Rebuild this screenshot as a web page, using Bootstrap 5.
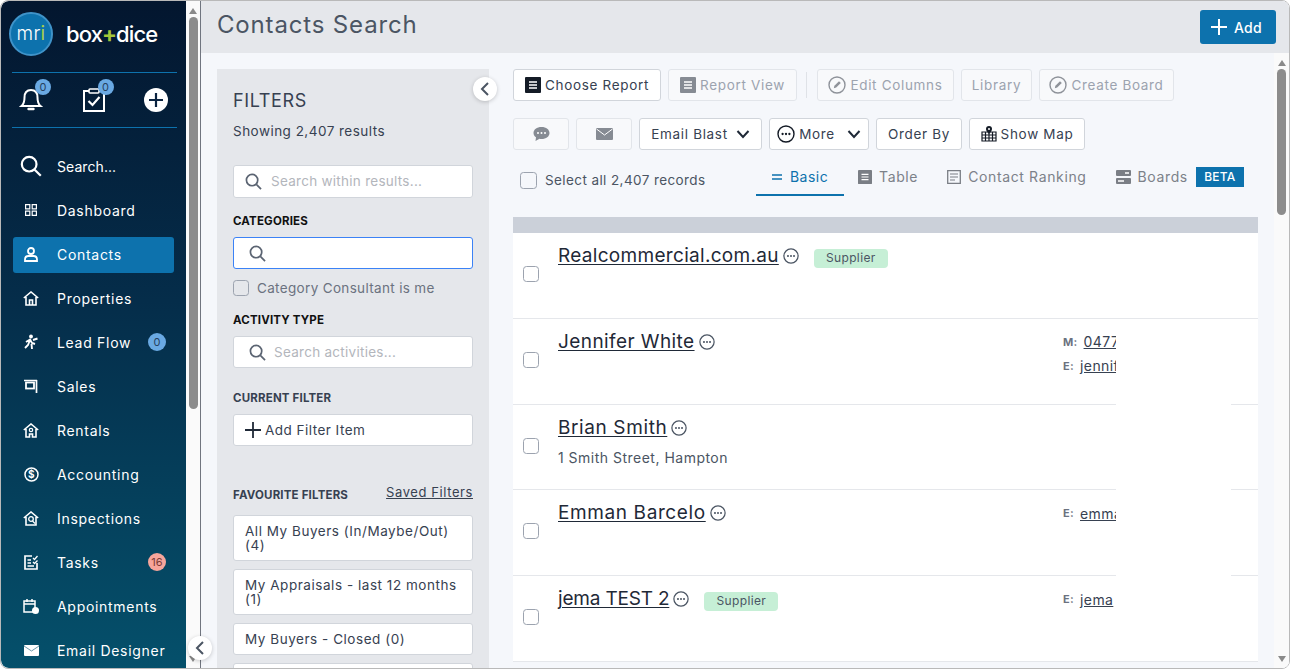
<!doctype html>
<html lang="en"><head><meta charset="utf-8"><title>Contacts Search</title>
<link href="https://cdn.jsdelivr.net/npm/bootstrap@5.3.0/dist/css/bootstrap.min.css" rel="stylesheet">
<style>
html,body{height:100%;overflow:hidden;background:#fff}
body{font-family:Inter,"Noto Sans",sans-serif;font-size:14px;letter-spacing:.022em;color:#374151}
.frame{height:669px;border:1px solid #b9b9b9;border-radius:8px;overflow:hidden;display:flex;position:relative}
.side{width:185px;flex:none;background:linear-gradient(180deg,#03162f 0%,#052d4a 45%,#05506b 100%);color:#fff;border-radius:8px 0 0 8px;padding:0 9px 0 11px;overflow:hidden}
.logo-row{height:72px;padding-bottom:5px;display:flex;align-items:center;gap:13px;border-bottom:1px solid #0d72ad}
.mri{width:44px;height:44px;margin-left:-3px;border-radius:50%;background:#0d72ad;border:2px solid #3f93c9;display:flex;align-items:center;justify-content:center;font-size:19px;font-weight:300;color:#fff;letter-spacing:.02em}
.mri b{font-weight:400;color:#a8d04a}
.boxdice{font-size:22px;font-weight:500;letter-spacing:-.04em;color:#fff;white-space:nowrap}
.boxdice i{font-style:normal;color:#a4c639;font-weight:700}
.quick{height:55px;border-bottom:1px solid #0d72ad;display:flex;align-items:center;justify-content:space-between;padding:0 8px 0 6px}
.qi{position:relative;display:block;width:26px;height:26px}
.cnt{position:absolute;top:-8px;right:-7px;width:16px;height:16px;border-radius:50%;background:#6aa9e3;color:#26415f;font-size:11px;display:flex;align-items:center;justify-content:center;letter-spacing:0}
.menu{padding-top:21px;margin:0 3px 0 1px}
.menu .nav-link{height:36px;margin-bottom:8px;padding:0 8px 2px 0;color:#fff;display:flex;align-items:center;font-size:14px;letter-spacing:.05em;border-radius:3px;white-space:nowrap}
.menu .nav-link.active-item{background:#0d72ad}
.menu .nav-link.ls-tight{letter-spacing:.005em}
.mi{width:44px;flex:none;display:flex;justify-content:center;padding-right:8px}
.pill{margin-left:auto;width:18px;height:18px;border-radius:50%;padding:0;font-size:11px;font-weight:400;display:flex;align-items:center;justify-content:center;letter-spacing:0}
.pill-blue{background:#6aa9e3;color:#26415f}
.pill-red{background:#f6a59b;color:#7a3b36}
.sbar{width:14px;flex:none;background:#fafafa;position:relative;display:flex;flex-direction:column;align-items:center;justify-content:space-between}
.sbar-main{width:15px}
.tri-up,.tri-down{width:0;height:0;border-left:4.5px solid transparent;border-right:4.5px solid transparent}
.tri-up{border-bottom:6px solid #8a8a8a}.tri-down{border-top:6px solid #8a8a8a}
.sb-top{display:flex;flex-direction:column;align-items:center;padding-top:7px;gap:3px}
.sb-foot{padding-bottom:6px}
.thumb{width:9px;border-radius:5px;background:#8c8c8c}
.t-left{height:392px}.t-main{height:146px;margin-top:0}
.vline{width:1px;flex:none;background:#70757f}
.main{flex:1;min-width:0;display:flex;flex-direction:column;background:#f5f7fb}
.top{height:52px;flex:none;background:#e5e7eb;display:flex;align-items:center;justify-content:space-between;padding:0 13px 0 16px}
.top h1{font-size:24px;font-weight:400;margin:0 0 4px;color:#4b5563;letter-spacing:.035em}
.add-btn{width:76px;height:34px;background:#0d72ad;color:#fff;border:0;border-radius:3px;display:flex;align-items:center;justify-content:center;gap:6px;padding:0 4px 0 0;font-size:14px;font-weight:500;letter-spacing:.02em}
.content{flex:1;display:flex;min-height:0}
.fpanel{width:272px;flex:none;margin:16px 24px 0 16px;background:#e5e7eb;padding:20px 16px 0;position:relative;overflow:hidden}
.fpanel h2{font-size:18px;font-weight:400;color:#374151;margin:1px 0 10px;line-height:22px;letter-spacing:.035em}
.showing{line-height:18px;margin-bottom:25px;letter-spacing:.035em;font-size:13.5px;color:#374151}
.flabel{font-size:11.5px;font-weight:700;color:#111;line-height:14px;letter-spacing:.015em}
.lbl-cat{margin-bottom:9px}
.sinput{position:relative;height:32px;background:#fff;border:1px solid #d1d5db;border-radius:3px;display:flex;align-items:center;padding-left:15px;gap:8px;color:#b3b6bc;font-size:13.5px}
.srch1{height:33px;padding-left:11px;gap:9px}
.sinput.focus{border-color:#3b82f6}
.sinput input{border:0;outline:0;background:transparent;padding:0;width:190px;font-size:13.5px;letter-spacing:.02em}
.sinput input::placeholder{color:#b3b6bc;opacity:1}
.fchk{display:flex;align-items:center;gap:8px;margin:10px 0 16px;color:#6b7280;line-height:18px;font-size:13.5px;letter-spacing:.025em}
.form-check-input{width:16px;height:16px;margin:0;flex:none;border-color:#9ca3af;background-color:transparent;border-radius:3px}
.add-filter{height:32px;background:#fff;border:1px solid #d1d5db;border-radius:3px;width:100%;text-align:left;padding:0 0 0 11px;display:flex;align-items:center;gap:4px;font-size:13.5px;color:#374151;letter-spacing:.035em}
.lbl-act{margin-bottom:9px}
.lbl-cur{margin:23px 0 9px;color:#374151}
.favhead{display:flex;justify-content:space-between;margin:42px 0 13px;align-items:flex-start}
.favhead .flabel{color:#374151}
.favhead a{color:#374151;font-size:13px;letter-spacing:.045em;line-height:14px;margin-top:-3px}
.favitem{display:block;background:#fff;border:1px solid #d1d5db;border-radius:3px;padding:8px 11px;font-size:13.5px;line-height:14px;color:#374151;margin-bottom:8px;letter-spacing:.04em}
.results{flex:1;min-width:0;padding-top:16px;margin-right:16px;display:flex;flex-direction:column}
.tb{display:flex;gap:7px;height:32px;margin-bottom:17px}
.tbtn{height:32px;padding:0;display:flex;align-items:center;justify-content:center;gap:4px;background:#fff;border:1px solid #d1d5db;border-radius:3px;color:#374151;font-size:13.5px;letter-spacing:.05em;white-space:nowrap}
.tbtn.off{background:#f8f9fb;color:#9ca3af;border-color:#e2e5ea;opacity:1}
.w-cr{width:148px}.w-rv{width:129px}.w-ec{width:137px}.w-lib{width:71px}.w-cb{width:135px}.w-ic{width:56px}.w-eb{width:123px}.w-mo{width:100px}.w-ob{width:86px}.w-sm{width:116px}
.tsep{width:1px;height:26px;background:#dfe2e7;margin:3px 3px 3px 2px}
.tabs-row{height:53px;display:flex;align-items:flex-start;margin-top:-3px}
.selall{display:flex;align-items:center;gap:8px;padding:6px 0 0 7px;width:243px;color:#4b5563;letter-spacing:.03em;font-size:13.5px}
.selall .form-check-input{width:17px;height:17px}
.tabn{display:flex;gap:14px;align-items:flex-start;height:32px}
.tablink{display:flex;align-items:center;gap:7px;height:32px;padding:0 0 7px;color:#7c8189;font-size:14px;letter-spacing:.045em;white-space:nowrap;text-decoration:none}
.tablink+.tablink+.tablink{margin-left:15px}
.tablink.on{color:#0d72ad;border-bottom:2px solid #0d72ad;width:88px;justify-content:center;gap:8px;padding-bottom:5px;letter-spacing:.035em}
.beta{background:#0d72ad;color:#fff;border-radius:0;font-size:12px;font-weight:500;padding:0;width:48px;height:20px;display:flex;align-items:center;justify-content:center;margin:1px 0 0 1px;letter-spacing:.02em}
.gbar{height:16px;background:#cbd0d9;flex:none}
.rlist{position:relative;flex:1;overflow:hidden}
.crow{height:85.75px;background:#fff;border-bottom:1px solid #e5e7eb;display:flex;position:relative}
.ccheck{width:45px;flex:none;padding:33px 0 0 10px}
.cmain{flex:1;min-width:0;padding-top:10px}
.cname{display:flex;align-items:center;gap:4px;line-height:26px}
.cname a{font-size:19px;color:#1f2937;letter-spacing:.022em;text-underline-offset:2px;text-decoration-thickness:1px}
.cname .nm-tight{letter-spacing:-.01em}
.cname .nm-mid{letter-spacing:.016em}
.cname .nm-wide{letter-spacing:.032em}
.sup{background:#c6efd6;color:#4b5563;font-size:12px;font-weight:400;border-radius:4px;width:74px;height:19px;padding:0;display:flex;align-items:center;justify-content:center;margin:4px 0 0 11px;letter-spacing:.03em}
.addr{margin-top:8px;color:#4b5563;font-size:14px;line-height:18px;letter-spacing:.035em}
.cinfo{width:195px;flex:none;padding-top:11px}
.cline{display:flex;align-items:center;gap:6px;height:24px;white-space:nowrap;overflow:hidden}
.cline b{font-size:11px;color:#6b7280;font-weight:700}
.cline a{color:#374151;font-size:14px;letter-spacing:.03em}
.mask{position:absolute;left:603px;top:87px;width:115px;height:340px;background:#fff}
.fold{position:absolute;width:24px;height:24px;border-radius:50%;background:#fff;border:0;padding:0;display:flex;align-items:center;justify-content:center;box-shadow:0 1px 4px rgba(0,0,0,.2)}
.fold-side{left:187px;top:635px}
.fold-filter{left:472px;top:76px}
</style></head><body>
<svg width="0" height="0" class="position-absolute"><defs>
<symbol id="mag" viewBox="0 0 18 18"><circle cx="7.5" cy="7.5" r="6" fill="none" stroke="currentColor" stroke-width="1.8"/><path d="M12 12l5 5" stroke="currentColor" stroke-width="1.8" fill="none"/></symbol>
<symbol id="dots" viewBox="0 0 18 18"><circle cx="9" cy="9" r="8" fill="none" stroke="currentColor" stroke-width="1.400"/><circle cx="5.6" cy="9" r="1.15" fill="currentColor"/><circle cx="9" cy="9" r="1.15" fill="currentColor"/><circle cx="12.4" cy="9" r="1.15" fill="currentColor"/></symbol>
<symbol id="rep" viewBox="0 0 16 16"><rect width="16" height="16" rx="1" fill="currentColor"/><path d="M4 5h8M4 8h8M4 11h8" stroke="#fff" stroke-width="1.4"/></symbol>
<symbol id="noedit" viewBox="0 0 18 18"><circle cx="9" cy="9" r="8" fill="none" stroke="currentColor" stroke-width="1.400"/><path d="M5.8 12.2l.6-2.4 4.6-4.6 1.8 1.8-4.6 4.6z" fill="currentColor"/></symbol>
<symbol id="chev" viewBox="0 0 14 10"><path d="M1.5 2l5.5 6 5.5-6" fill="none" stroke="currentColor" stroke-width="2"/></symbol>
<symbol id="left" viewBox="0 0 10 16"><path d="M8 2L2 8l6 6" fill="none" stroke="currentColor" stroke-width="2"/></symbol>
</defs></svg>
<div class="frame">
<aside class="side">
  <div class="logo-row"><div class="mri">mr<b>i</b></div><div class="boxdice">box<i>+</i>dice</div></div>
  <div class="quick">
    <span class="qi"><svg width="26" height="26" viewBox="0 0 26 26"><path d="M13 3c-4.400 0-6.500 3.300-6.500 7.500 0 4.500-1 6.800-3 8.500h19c-2-1.700-3-4-3-8.500C19.500 6.300 17.400 3 13 3z" fill="none" stroke="#fff" stroke-width="2"/><path d="M10.500 22h5" stroke="#fff" stroke-width="2.400" stroke-linecap="round"/></svg><span class="cnt">0</span></span>
    <span class="qi"><svg width="26" height="26" viewBox="0 0 26 26"><path d="M8 4H3v20h20V4h-5" fill="none" stroke="#fff" stroke-width="2"/><rect x="8" y="2" width="10" height="4" rx="1" fill="none" stroke="#fff" stroke-width="1.600"/><path d="M7.500 14l4 4 7-8" fill="none" stroke="#fff" stroke-width="2.200"/></svg><span class="cnt">0</span></span>
    <span class="qi"><svg width="26" height="26" viewBox="0 0 26 26"><circle cx="13" cy="13" r="12" fill="#fff"/><path d="M13 6v14M6 13h14" stroke="#0a2340" stroke-width="2.200"/></svg></span>
  </div>
  <nav class="nav flex-column menu">
    <a class="nav-link ls-tight" href="#"><span class="mi"><svg width="22" height="22" viewBox="0 0 18 18" color="#fff"><use href="#mag"/></svg></span>Search...</a>
    <a class="nav-link" href="#"><span class="mi"><svg width="12" height="12" viewBox="0 0 12 12"><path d="M.6.600h4.200v4.200H.6zM7.200.6h4.200v4.200H7.200zM.6 7.200h4.200v4.200H.6zM7.200 7.200h4.200v4.200H7.200z" fill="none" stroke="#fff" stroke-width="1.200"/></svg></span>Dashboard</a>
    <a class="nav-link active-item" href="#"><span class="mi"><svg width="14" height="15" viewBox="0 0 14 15"><circle cx="7" cy="4" r="3" fill="none" stroke="#fff" stroke-width="1.800"/><path d="M1 14v-1.500C1 10 3 9 4.500 9h5C11 9 13 10 13 12.500V14z" fill="none" stroke="#fff" stroke-width="1.800"/></svg></span>Contacts</a>
    <a class="nav-link" href="#"><span class="mi"><svg width="16" height="15" viewBox="0 0 16 15"><path d="M.8 7L8 1l7.200 6M3 6v8h10V6M6.500 14V9h3v5" fill="none" stroke="#fff" stroke-width="1.600"/></svg></span>Properties</a>
    <a class="nav-link" href="#"><span class="mi"><svg width="16" height="16" viewBox="0 0 16 16"><circle cx="8" cy="2.500" r="1.900" fill="#fff"/><path d="M3 8l4-2.500 2 3.500 3 1M7 6L5 11l-3 3M8.500 10l.5 5M10 6l4.500-1.500" fill="none" stroke="#fff" stroke-width="1.900"/></svg></span>Lead Flow<span class="badge pill pill-blue">0</span></a>
    <a class="nav-link" href="#"><span class="mi"><svg width="14" height="15" viewBox="0 0 14 15"><path d="M0 1.500h13M12.500 1v13" stroke="#fff" stroke-width="1.700" fill="none"/><rect x="2" y="3.500" width="8" height="6" fill="none" stroke="#fff" stroke-width="1.800"/></svg></span>Sales</a>
    <a class="nav-link" href="#"><span class="mi"><svg width="16" height="15" viewBox="0 0 16 15"><path d="M.8 7L8 1l7.200 6M3 6v8h3.500v-3h3v3H13V6" fill="none" stroke="#fff" stroke-width="1.600"/><circle cx="8" cy="7" r="1.700" fill="none" stroke="#fff" stroke-width="1.200"/></svg></span>Rentals</a>
    <a class="nav-link" href="#"><span class="mi"><svg width="15" height="15" viewBox="0 0 15 15"><circle cx="7.500" cy="7.500" r="6.500" fill="none" stroke="#fff" stroke-width="1.500"/><text x="7.500" y="11" text-anchor="middle" font-size="10" font-weight="700" fill="#fff" font-family="Inter,sans-serif">$</text></svg></span>Accounting</a>
    <a class="nav-link" href="#"><span class="mi"><svg width="16" height="15" viewBox="0 0 16 15"><path d="M.8 7L8 1l7.200 6M3 6v8h10V6" fill="none" stroke="#fff" stroke-width="1.600"/><circle cx="8" cy="8" r="2.300" fill="none" stroke="#fff" stroke-width="1.300"/><path d="M9.500 10l2.500 2.500" stroke="#fff" stroke-width="1.300"/></svg></span>Inspections</a>
    <a class="nav-link" href="#"><span class="mi"><svg width="14" height="15" viewBox="0 0 14 15"><path d="M8 1H1v13h12V8" fill="none" stroke="#fff" stroke-width="1.700"/><path d="M3.500 5H7M3.500 8H7M3.500 11H10" stroke="#fff" stroke-width="1.300"/><path d="M9 3l1.500 1.500L13.500 1M9 7l1.500 1.500L13.500 5.500" fill="none" stroke="#fff" stroke-width="1.300"/></svg></span>Tasks<span class="badge pill pill-red">16</span></a>
    <a class="nav-link" href="#"><span class="mi"><svg width="16" height="16" viewBox="0 0 16 16"><path d="M1 3h11v11H1zM1 6h11M4 1v3M9 1v3" fill="none" stroke="#fff" stroke-width="1.500"/><circle cx="12.500" cy="12.500" r="3.500" fill="#fff"/></svg></span>Appointments</a>
    <a class="nav-link" href="#"><span class="mi"><svg width="15" height="11" viewBox="0 0 15 11"><rect width="15" height="11" rx="1" fill="#fff"/><path d="M0 1l7.500 5L15 1" fill="none" stroke="#6f98ab" stroke-width="1"/></svg></span>Email Designer</a>
  </nav>
</aside>
<div class="sbar"><div class="sb-top"><span class="tri-up"></span><span class="thumb t-left"></span></div><div class="sb-foot"><span class="tri-down d-block"></span></div></div>
<div class="vline"></div>
<main class="main">
  <header class="top"><h1>Contacts Search</h1><button class="btn add-btn"><svg width="18" height="18" viewBox="0 0 18 18"><path d="M9 1v16M1 9h16" stroke="#fff" stroke-width="2"/></svg>Add</button></header>
  <div class="content">
    <section class="fpanel">
      <h2>FILTERS</h2>
      <div class="showing">Showing 2,407 results</div>
      <div class="sinput srch1 mb-3"><svg width="17" height="17" color="#5b6472"><use href="#mag"/></svg><input placeholder="Search within results..." aria-label="Search within results"></div>
      <div class="flabel lbl-cat">CATEGORIES</div>
      <div class="sinput focus"><svg width="17" height="17" color="#5b6472"><use href="#mag"/></svg><input aria-label="Categories"></div>
      <label class="fchk"><input class="form-check-input" type="checkbox">Category Consultant is me</label>
      <div class="flabel lbl-act">ACTIVITY TYPE</div>
      <div class="sinput"><svg width="17" height="17" color="#5b6472"><use href="#mag"/></svg><input placeholder="Search activities..." aria-label="Search activities"></div>
      <div class="flabel lbl-cur">CURRENT FILTER</div>
      <button class="btn add-filter"><svg width="16" height="16" viewBox="0 0 16 16"><path d="M8 0v16M0 8h16" stroke="#1f2937" stroke-width="1.800"/></svg>Add Filter Item</button>
      <div class="favhead"><span class="flabel">FAVOURITE FILTERS</span><a href="#">Saved Filters</a></div>
      <a class="favitem text-decoration-none" href="#">All My Buyers (In/Maybe/Out) (4)</a>
      <a class="favitem text-decoration-none" href="#">My Appraisals - last 12 months (1)</a>
      <a class="favitem text-decoration-none" href="#">My Buyers - Closed (0)</a>
      <a class="favitem text-decoration-none" href="#">&nbsp;</a>
    </section>
    <section class="results">
      <div class="tb">
        <button class="btn tbtn w-cr"><svg width="16" height="16" color="#141b26"><use href="#rep"/></svg>Choose Report</button>
        <button class="btn tbtn off w-rv"><svg width="16" height="16" color="#868b93"><use href="#rep"/></svg>Report View</button>
        <span class="tsep"></span>
        <button class="btn tbtn off w-ec"><svg width="18" height="18" color="#8f939a"><use href="#noedit"/></svg>Edit Columns</button>
        <button class="btn tbtn off w-lib">Library</button>
        <button class="btn tbtn off w-cb"><svg width="18" height="18" color="#8f939a"><use href="#noedit"/></svg>Create Board</button>
      </div>
      <div class="tb">
        <button class="btn tbtn off w-ic" aria-label="SMS"><svg width="17" height="15" viewBox="0 0 17 15"><path d="M8.500 0C3.800 0 .5 2.600.5 6c0 1.800 1 3.300 2.500 4.300L2.500 14l4-2.200c.6.100 1.300.2 2 .2 4.700 0 8-2.600 8-6s-3.300-6-8-6z" fill="#868b93"/><circle cx="5" cy="6" r="1" fill="#fff"/><circle cx="8.500" cy="6" r="1" fill="#fff"/><circle cx="12" cy="6" r="1" fill="#fff"/></svg></button>
        <button class="btn tbtn off w-ic" aria-label="Email"><svg width="17" height="12" viewBox="0 0 17 12"><rect width="17" height="12" rx="1" fill="#868b93"/><path d="M.5 1l8 6 8-6" fill="none" stroke="#fff" stroke-width="1"/></svg></button>
        <button class="btn tbtn w-eb gap-2">Email Blast<svg width="14" height="10" color="#1f2937"><use href="#chev"/></svg></button>
        <button class="btn tbtn w-mo"><svg width="18" height="18" color="#141b26"><use href="#dots"/></svg>More<svg class="ms-2" width="14" height="10" color="#1f2937"><use href="#chev"/></svg></button>
        <button class="btn tbtn w-ob">Order By</button>
        <button class="btn tbtn w-sm"><svg width="16" height="16" viewBox="0 0 16 16"><path d="M1 6h14v9H1zM1 9h14M1 12h14M4.500 6v9M8 6v9M11.500 6v9" fill="none" stroke="#141b26" stroke-width="1.200"/><path d="M8 0a3 3 0 0 0-3 3c0 2 3 5 3 5s3-3 3-5a3 3 0 0 0-3-3z" fill="#141b26"/><circle cx="8" cy="3" r="1" fill="#fff"/></svg>Show Map</button>
      </div>
      <div class="tabs-row">
        <label class="selall"><input class="form-check-input" type="checkbox">Select all 2,407 records</label>
        <div class="tabn">
          <a class="tablink on" href="#"><svg width="10" height="6" viewBox="0 0 10 6"><path d="M0 1h10M0 5h10" stroke="#0d72ad" stroke-width="1.300"/></svg>Basic</a>
          <a class="tablink" href="#"><svg width="14" height="14" color="#7a7e85"><use href="#rep" width="14" height="14"/></svg>Table</a>
          <a class="tablink" href="#"><svg width="14" height="14" viewBox="0 0 14 14"><path d="M.7.700h12.600v12.600H.7z" fill="none" stroke="#7a7e85" stroke-width="1.300"/><path d="M3 4h8M3 7h8M3 10h5" stroke="#7a7e85" stroke-width="1.200"/></svg>Contact Ranking</a>
          <a class="tablink" href="#"><svg width="15" height="14" viewBox="0 0 15 14"><rect width="15" height="6" rx="1" fill="#7a7e85"/><rect y="8" width="15" height="6" rx="1" fill="#7a7e85"/><path d="M9 3h4M2 11h6" stroke="#fff" stroke-width="1.500"/></svg>Boards<span class="badge beta">BETA</span></a>
        </div>
      </div>
      <div class="gbar"></div>
      <div class="rlist">
        <div class="crow"><div class="ccheck"><input class="form-check-input" type="checkbox" aria-label="Select"></div><div class="cmain"><div class="cname"><a class="nm-mid" href="#">Realcommercial.com.au</a><svg width="16" height="16" color="#4b5563"><use href="#dots"/></svg><span class="badge sup">Supplier</span></div></div><div class="cinfo"></div></div>
        <div class="crow"><div class="ccheck"><input class="form-check-input" type="checkbox" aria-label="Select"></div><div class="cmain"><div class="cname"><a href="#">Jennifer White</a><svg width="16" height="16" color="#4b5563"><use href="#dots"/></svg></div></div><div class="cinfo"><div class="cline"><b>M:</b><a href="#">0477</a></div><div class="cline"><b>E:</b><a href="#">jennifer</a></div></div></div>
        <div class="crow"><div class="ccheck"><input class="form-check-input" type="checkbox" aria-label="Select"></div><div class="cmain"><div class="cname"><a class="nm-wide" href="#">Brian Smith</a><svg width="16" height="16" color="#4b5563"><use href="#dots"/></svg></div><div class="addr">1 Smith Street, Hampton</div></div><div class="cinfo"></div></div>
        <div class="crow"><div class="ccheck"><input class="form-check-input" type="checkbox" aria-label="Select"></div><div class="cmain"><div class="cname"><a class="nm-wide" href="#">Emman Barcelo</a><svg width="16" height="16" color="#4b5563"><use href="#dots"/></svg></div></div><div class="cinfo"><div class="cline"><b>E:</b><a href="#">emman</a></div></div></div>
        <div class="crow"><div class="ccheck"><input class="form-check-input" type="checkbox" aria-label="Select"></div><div class="cmain"><div class="cname"><a class="nm-tight" href="#">jema TEST 2</a><svg width="16" height="16" color="#4b5563"><use href="#dots"/></svg><span class="badge sup">Supplier</span></div></div><div class="cinfo"><div class="cline"><b>E:</b><a href="#">jema</a></div></div></div>
        <div class="mask"></div>
      </div>
    </section>
    <div class="sbar sbar-main"><div class="sb-top"><span class="tri-up"></span><span class="thumb t-main"></span></div><div class="sb-foot"><span class="tri-down d-block"></span></div></div>
  </div>
</main>
<button class="fold fold-side" aria-label="Collapse menu"><svg width="10" height="16" color="#4b5563"><use href="#left"/></svg></button>
<button class="fold fold-filter" aria-label="Collapse filters"><svg width="10" height="16" color="#4b5563"><use href="#left"/></svg></button>
</div>
<script src="https://cdn.jsdelivr.net/npm/bootstrap@5.3.0/dist/js/bootstrap.bundle.min.js"></script>
</body></html>
